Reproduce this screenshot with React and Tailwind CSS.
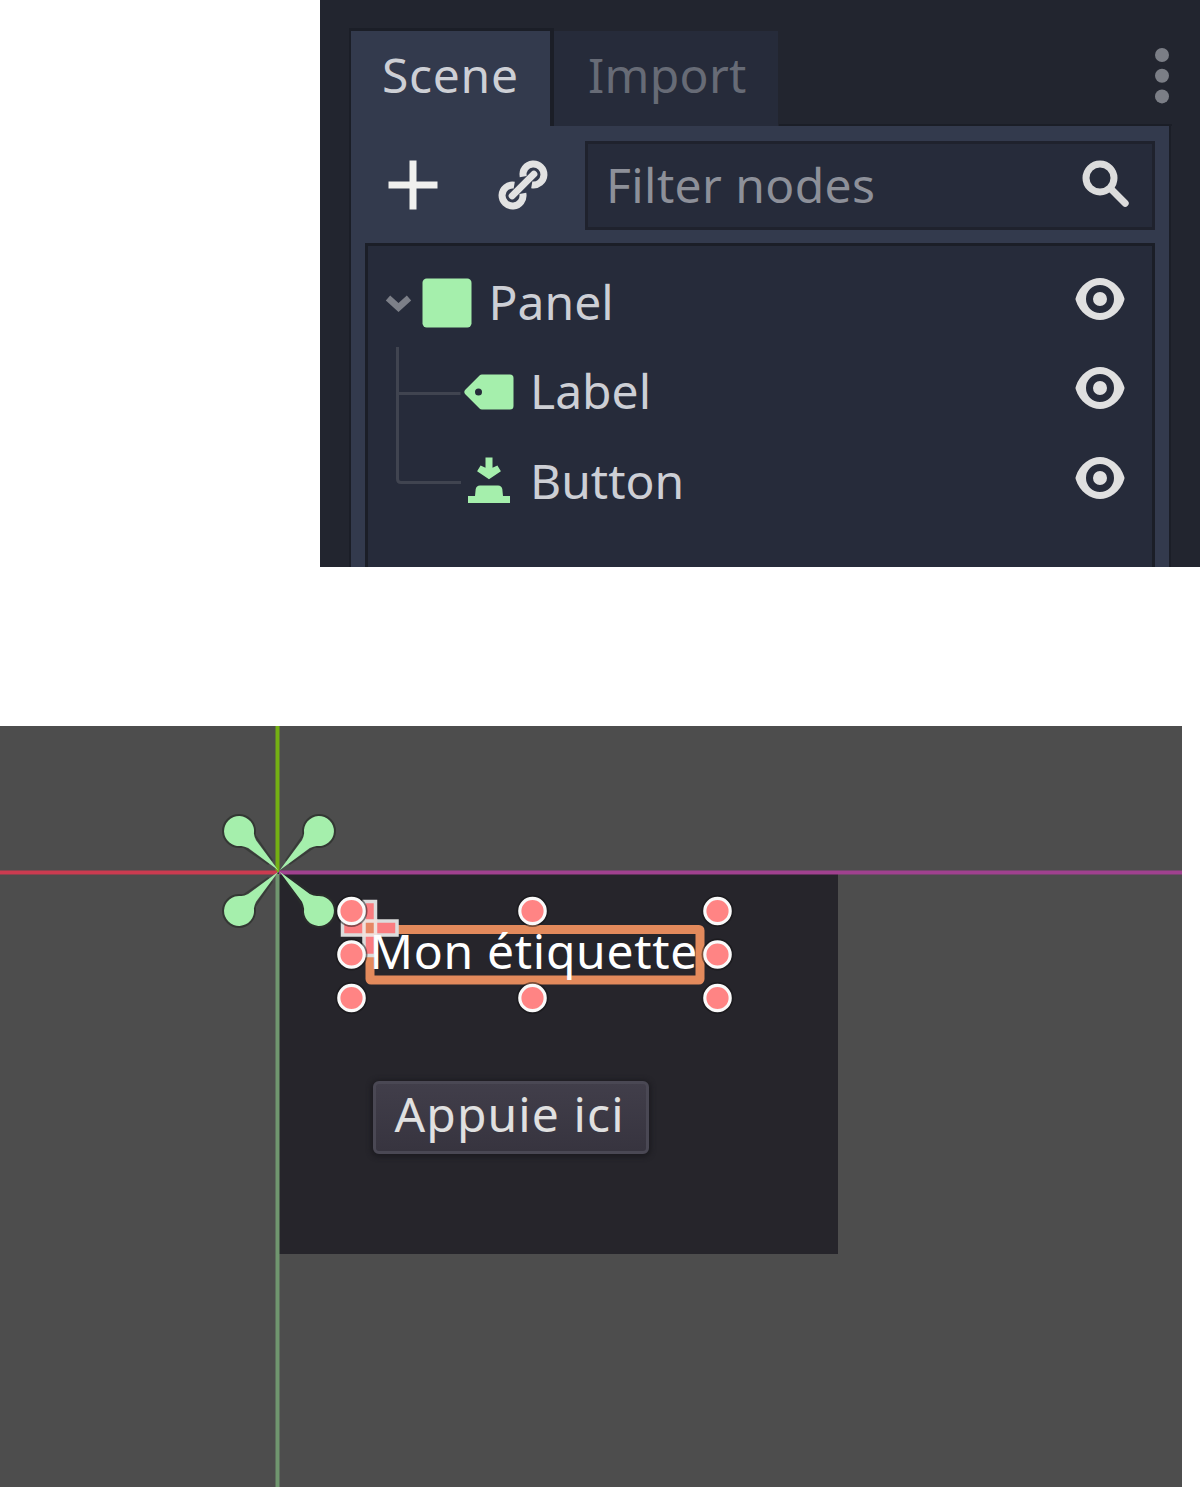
function Icon({ className = "", children }) {
  return (
    <svg viewBox="0 0 16 16" className={`block h-14 w-14 shrink-0 ${className}`} fill="currentColor">
      {children}
    </svg>
  );
}

function AddIcon() {
  return (
    <Icon>
      <path d="M7 1v6H1v2h6v6h2V9h6V7H9V1z" />
    </Icon>
  );
}

function LinkIcon() {
  return (
    <Icon>
      <g fill="none" stroke="currentColor" strokeWidth="2">
        <path d="M8.05 5.6A3 3 0 1 1 10.5 7.96" />
        <path d="M7.95 10.4A3 3 0 1 1 5.5 8.04" />
        <path d="M4.9 11.1 11.1 4.9" strokeLinecap="round" />
      </g>
    </Icon>
  );
}

function SearchIcon() {
  return (
    <Icon>
      <g fill="none" stroke="currentColor" strokeWidth="2">
        <circle cx="6" cy="6" r="4" />
        <path d="M9 9l4.2 4.2" strokeLinecap="round" />
      </g>
    </Icon>
  );
}

function EyeIcon() {
  return (
    <Icon className="text-[#e0e0e0]">
      <path d="M8 2C5.443 2 2.209 3.948 1.045 7.705a1 1 0 0 0-.004.578C2.181 12.063 5.437 14 8 14s5.819-1.937 6.959-5.717a1 1 0 0 0 0-.566C13.861 3.979 10.558 2 8 2zm0 2a4 4 0 0 1 0 8 4 4 0 0 1 0-8zm0 2a2 2 0 0 0 0 4 2 2 0 0 0 0-4z" />
    </Icon>
  );
}

function PanelIcon() {
  return (
    <Icon className="text-[#a5efac]">
      <rect x="1" y="1" width="14" height="14" rx="1.2" />
    </Icon>
  );
}

function LabelIcon() {
  return (
    <Icon className="text-[#a5efac]">
      <path
        fillRule="evenodd"
        d="M6 3a1 1 0 0 0-.71.29l-4 4a1 1 0 0 0 0 1.42l4 4A1 1 0 0 0 6 13h8a1 1 0 0 0 1-1V4a1 1 0 0 0-1-1zM5 7a1 1 0 0 1 0 2 1 1 0 0 1 0-2z"
      />
    </Icon>
  );
}

function ButtonIcon() {
  return (
    <Icon className="text-[#a5efac]">
      <path d="M7 1v2.900L5.600 3.300 4.600 4.900 8 7.200l3.400-2.300-1-1.600L9 3.900V1zM5.400 9a1.300 1.300 0 0 0-1.200 1L4 12H2v2h12v-2h-2l-.2-2a1.300 1.300 0 0 0-1.200-1z" />
    </Icon>
  );
}

function TreeRow({ indent, icon, label }) {
  return (
    <div className="flex h-[89.4px] items-start">
      <div className={`flex ${indent}`}>{icon}</div>
      <span className="-mt-[3px] ml-[13.5px] grow leading-[60px]">{label}</span>
      <div className="-mt-[4px] mr-[24px]">
        <EyeIcon />
      </div>
    </div>
  );
}

function SceneDock() {
  return (
    <section className="ml-80 flex h-[567px] w-[880px] shrink-0 flex-col overflow-hidden bg-[#22252f] px-[29px] pt-[28px] text-[48px]">
      <div className="flex h-[98px] items-start">
        <div className="h-[98px] w-[205px] border-t-[3px] border-r-4 border-l-[2px] border-[#1b1e27] bg-[#333a4d] pl-[31px] leading-[88px] tracking-[0.7px] text-[#cdcfd5]">
          Scene
        </div>
        <div className="mt-[3px] h-[95px] w-[224px] bg-[#262b3a] pl-[34px] leading-[88px] tracking-[0.3px] text-[#676b76]">
          Import
        </div>
        <svg viewBox="0 0 14 56" className="mt-[20px] mr-[2px] ml-auto h-14 w-[14px] text-[#7b7e86]" fill="currentColor">
          <circle cx="7" cy="7" r="7" />
          <circle cx="7" cy="27.7" r="7" />
          <circle cx="7" cy="48.4" r="7" />
        </svg>
      </div>
      <div className="-mx-px flex grow flex-col">
        <div className="-mt-[2px] flex h-[2px] justify-end">
          <div className="h-[2px] w-[393px] bg-[#1b1e27]" />
        </div>
        <div className="mx-px flex grow flex-col border-x-[2px] border-[#1b1e27] bg-[#333a4d] px-[14px] pt-[15px]">
          <div className="flex h-[88px] items-center">
            <div className="ml-[19.5px] text-[#f0f0ee]">
              <AddIcon />
            </div>
            <div className="ml-[54px] text-[#e2e2e2]">
              <LinkIcon />
            </div>
            <div className="ml-auto flex h-[89px] w-[570px] items-center border-[3px] border-[#1f222d] bg-[#262b3a] pl-[18px] text-[#8d9099]">
              <span className="grow leading-[80px] tracking-[0.4px]">Filter nodes</span>
              <div className="mr-[17px] text-[#dcdcdc]">
                <SearchIcon />
              </div>
            </div>
          </div>
          <div className="relative mt-[14px] grow border-x-[3px] border-t-[3px] border-[#1b1e27] bg-[#262b3a] pt-[29px] text-[#cdcfd5]">
            <svg viewBox="0 0 80 240" className="absolute top-[47px] left-[15px] h-[240px] w-[80px]" fill="none">
              <path d="M5 5 15.500 14.500 26 5" stroke="#7c7f88" strokeWidth="6.500" />
              <path d="M14.500 54v132q0 3.500 3.500 3.500h60M14.500 100.500h63" stroke="#404450" strokeWidth="3" />
            </svg>
            <TreeRow indent="ml-[51px]" icon={<PanelIcon />} label="Panel" />
            <TreeRow indent="ml-[92.5px]" icon={<LabelIcon />} label="Label" />
            <TreeRow indent="ml-[92.5px]" icon={<ButtonIcon />} label="Button" />
          </div>
        </div>
      </div>
    </section>
  );
}

const HANDLES = [
  [351.5, 185], [532.5, 185], [717.5, 185],
  [351.5, 228.5], [717.5, 228.5],
  [351.5, 272], [532.5, 272], [717.5, 272],
];

function AnchorPin({ angle }) {
  return (
    <g transform={`translate(279 145) rotate(${angle})`}>
      <circle cx="56.6" cy="0" r="17" fill="#2c302c" opacity="0.75" />
      <path d="M12 -2.500 45 -8.500M12 2.500 45 8.500" stroke="#2c302c" strokeOpacity="0.6" strokeWidth="2" />
      <path d="M1 0 38 -5.500Q42 -7 44.500 -9A15 15 0 1 1 44.500 9Q42 7 38 5.500Z" fill="#a5efac" />
    </g>
  );
}

function Viewport() {
  return (
    <section className="relative mt-[159px] h-[761px] w-[1182px] shrink-0 overflow-hidden bg-[#4d4d4d]">
      <div className="absolute top-[147px] left-[278px] h-[381px] w-[559.5px] bg-[#26252b]" />
      <svg viewBox="0 0 1182 761" className="absolute inset-0 h-full w-full">
        <path d="M277.500 0V146" stroke="#74b013" strokeWidth="4" />
        <path d="M277.500 148V761" stroke="#70966f" strokeWidth="4" />
        <path d="M0 146.500H277" stroke="#cb3b50" strokeWidth="4" />
        <path d="M279 146.500H1182" stroke="#a0418f" strokeWidth="4" />
        <AnchorPin angle={45} />
        <AnchorPin angle={135} />
        <AnchorPin angle={225} />
        <AnchorPin angle={315} />
        <rect x="370" y="203.500" width="330" height="50.500" rx="1" fill="none" stroke="#e38a5c" strokeWidth="9" />
      </svg>
      <div className="absolute top-[354.5px] left-[373px] flex h-[73px] w-[276px] rounded-[6px] border-[3px] border-[#4a4854] bg-linear-to-b from-[#413e4a] to-[#37343f] pl-[18.5px] text-[48px] leading-[59px] tracking-[1.1px] whitespace-nowrap text-[#e0e0e0] shadow-[0_1px_5px_2px_#1c1b20]">
        Appuie ici
      </div>
      <svg viewBox="0 0 1182 761" className="absolute inset-0 h-full w-full">
        <path
          d="M364 175.500h11.500v19.500h21.500v14h-21.500v20.500h-11.500v-20.500h-21.500v-14h21.500z"
          fill="#fa7c80"
          stroke="#dcdcdc"
          strokeWidth="3.500"
        />
        <path d="M364 195h11.500v14h-11.500z" fill="#e78664" stroke="#f0e0dc" strokeWidth="3.500" />
        {HANDLES.map(([x, y]) => (
          <g key={`${x}-${y}`}>
            <circle cx={x} cy={y} r="16" fill="#111114" opacity="0.5" />
            <circle cx={x} cy={y} r="12.700" fill="#ff8484" stroke="#fafafa" strokeWidth="3.200" />
          </g>
        ))}
      </svg>
      <span className="absolute top-[192px] left-[369.5px] text-[48px] leading-[66px] tracking-[0.7px] whitespace-nowrap text-white">
        Mon étiquette
      </span>
    </section>
  );
}

export default function App() {
  return (
    <main className="flex h-[1487px] w-[1200px] flex-col overflow-hidden bg-white font-['Noto_Sans',sans-serif]">
      <SceneDock />
      <Viewport />
    </main>
  );
}
